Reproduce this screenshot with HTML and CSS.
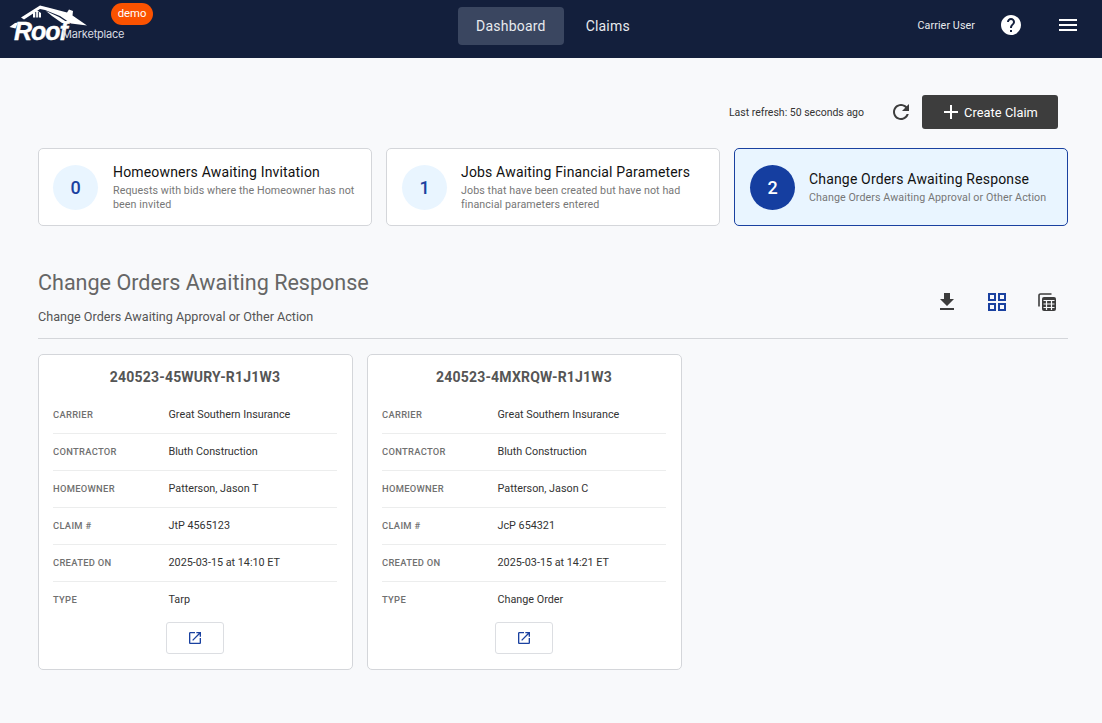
FILE: index.html
```html
<!DOCTYPE html>
<html lang="en">
<head>
    <meta charset="UTF-8">
    <meta name="viewport" content="width=device-width, initial-scale=1.0">
    <title>Roof Marketplace Dashboard</title>
    <link rel="stylesheet" href="styles.css">
</head>
<body>
    <header class="topbar">
        <div class="logo">
            <svg class="logo-roof" viewBox="0 0 100 40" width="100" height="40">
                <path d="M21 17.500 L40 5.500 L50 8 L67 12.500 L69 9.500 L73 11 L72.500 15.500 L87 25.500 L71 23.500 L60 16 L45 10 L40 9 L24 19.500 Z" fill="#fff"/>
                <path d="M46 11 L59 17 L69 23.500 L62 23 L52 16 Z" fill="#fff"/>
                <path d="M33 17.500 V13 L37 10.500 L41 13 V17.500 Z" fill="#fff"/>
                <path d="M35.700 12 V18 M38.400 12 V18" stroke="#131f3c" stroke-width="0.9"/>
                <path d="M9.500 27 L15 23 L18 22.500 L15.500 28.500 Z" fill="#fff"/>
            </svg>
            <span class="logo-roof-word">Roof</span>
            <span class="logo-market">Marketplace</span>
            <span class="demo-badge">demo</span>
        </div>
        <nav class="topnav">
            <a class="topnav-item active">Dashboard</a>
            <a class="topnav-item">Claims</a>
        </nav>
        <div class="topbar-right">
            <span class="user-name">Carrier User</span>
            <svg class="help-icon" viewBox="0 0 24 24" width="24" height="24"><path fill="#fff" d="M12 2C6.48 2 2 6.48 2 12s4.48 10 10 10 10-4.48 10-10S17.52 2 12 2zm1 17h-2v-2h2v2zm2.07-7.75l-.9.92C13.45 12.9 13 13.5 13 15h-2v-.5c0-1.1.45-2.1 1.17-2.83l1.24-1.26c.37-.36.59-.86.59-1.41 0-1.1-.9-2-2-2s-2 .9-2 2H8c0-2.21 1.79-4 4-4s4 1.79 4 4c0 .88-.36 1.68-.93 2.25z"/></svg>
            <svg class="menu-icon" viewBox="0 0 24 24" width="24" height="24"><path fill="#fff" d="M3 18h18v-2H3v2zm0-5h18v-2H3v2zm0-7v2h18V6H3z"/></svg>
        </div>
    </header>

    <main class="content">
        <div class="refresh-row">
            <span class="refresh-text">Last refresh: 50 seconds ago</span>
            <svg class="refresh-icon" viewBox="0 0 24 24" width="24" height="24"><path fill="#3d3d3d" d="M17.65 6.35C16.2 4.9 14.21 4 12 4c-4.42 0-7.99 3.58-7.99 8s3.57 8 7.99 8c3.73 0 6.84-2.55 7.73-6h-2.08c-.82 2.33-3.04 4-5.65 4-3.31 0-6-2.69-6-6s2.69-6 6-6c1.66 0 3.14.69 4.22 1.78L13 11h7V4l-2.35 2.35z"/></svg>
            <button class="create-btn">
                <svg viewBox="0 0 24 24" width="24" height="24"><path fill="#fff" d="M19 13h-6v6h-2v-6H5v-2h6V5h2v6h6v2z"/></svg>
                Create Claim
            </button>
        </div>

        <section class="stat-cards">
            <div class="stat-card">
                <div class="stat-num">0</div>
                <div>
                    <div class="stat-title">Homeowners Awaiting Invitation</div>
                    <div class="stat-desc">Requests with bids where the Homeowner has not been invited</div>
                </div>
            </div>
            <div class="stat-card">
                <div class="stat-num">1</div>
                <div>
                    <div class="stat-title">Jobs Awaiting Financial Parameters</div>
                    <div class="stat-desc">Jobs that have been created but have not had financial parameters entered</div>
                </div>
            </div>
            <div class="stat-card selected">
                <div class="stat-num">2</div>
                <div>
                    <div class="stat-title">Change Orders Awaiting Response</div>
                    <div class="stat-desc">Change Orders Awaiting Approval or Other Action</div>
                </div>
            </div>
        </section>

        <section class="list-head">
            <div>
                <h2>Change Orders Awaiting Response</h2>
                <p>Change Orders Awaiting Approval or Other Action</p>
            </div>
            <div class="view-icons">
                <svg viewBox="0 0 24 24" width="24" height="24"><path fill="#3d3d3d" d="M19 9h-4V3H9v6H5l7 7 7-7zM5 18v2h14v-2H5z"/></svg>
                <svg viewBox="0 0 24 24" width="24" height="24"><path fill="#1a41a0" d="M3 3v8h8V3H3zm6 6H5V5h4v4zm-6 4v8h8v-8H3zm6 6H5v-4h4v4zm4-16v8h8V3h-8zm6 6h-4V5h4v4zm-6 4v8h8v-8h-8zm6 6h-4v-4h4v4z"/></svg>
                <svg viewBox="0 0 24 24" width="24" height="24">
                    <path fill="none" stroke="#3d3d3d" stroke-width="1.6" d="M4 16.500V5.500A1.500 1.500 0 0 1 5.500 4H16.500"/>
                    <rect x="7" y="7" width="14" height="14" rx="2" fill="#3d3d3d"/>
                    <path stroke="#f8f9fb" stroke-width="1.200" d="M8.500 10.500H19.500M8.500 14H19.500M8.500 17.500H19.500M11.500 10.500V20M16.500 10.500V20"/>
                </svg>
            </div>
        </section>

        <section class="claim-cards">
            <article class="claim-card">
                <h3>240523-45WURY-R1J1W3</h3>
                <dl>
                    <div class="row"><dt>Carrier</dt><dd>Great Southern Insurance</dd></div>
                    <div class="row"><dt>Contractor</dt><dd>Bluth Construction</dd></div>
                    <div class="row"><dt>Homeowner</dt><dd>Patterson, Jason T</dd></div>
                    <div class="row"><dt>Claim #</dt><dd>JtP 4565123</dd></div>
                    <div class="row"><dt>Created On</dt><dd>2025-03-15 at 14:10 ET</dd></div>
                    <div class="row"><dt>Type</dt><dd>Tarp</dd></div>
                </dl>
                <button class="open-btn"><svg viewBox="0 0 24 24" width="16" height="16"><path fill="#1a41a0" d="M19 19H5V5h7V3H5c-1.110 0-2 .9-2 2v14c0 1.100.89 2 2 2h14c1.100 0 2-.9 2-2v-7h-2v7zM14 3v2h3.590l-9.830 9.830 1.410 1.410L19 6.410V10h2V3h-7z"/></svg></button>
            </article>
            <article class="claim-card">
                <h3>240523-4MXRQW-R1J1W3</h3>
                <dl>
                    <div class="row"><dt>Carrier</dt><dd>Great Southern Insurance</dd></div>
                    <div class="row"><dt>Contractor</dt><dd>Bluth Construction</dd></div>
                    <div class="row"><dt>Homeowner</dt><dd>Patterson, Jason C</dd></div>
                    <div class="row"><dt>Claim #</dt><dd>JcP 654321</dd></div>
                    <div class="row"><dt>Created On</dt><dd>2025-03-15 at 14:21 ET</dd></div>
                    <div class="row"><dt>Type</dt><dd>Change Order</dd></div>
                </dl>
                <button class="open-btn"><svg viewBox="0 0 24 24" width="16" height="16"><path fill="#1a41a0" d="M19 19H5V5h7V3H5c-1.110 0-2 .9-2 2v14c0 1.100.89 2 2 2h14c1.100 0 2-.9 2-2v-7h-2v7zM14 3v2h3.590l-9.830 9.830 1.410 1.410L19 6.410V10h2V3h-7z"/></svg></button>
            </article>
        </section>
    </main>
</body>
</html>
```

FILE: styles.css
```css
* { margin: 0; padding: 0; box-sizing: border-box; }
html, body { height: 100%; }
body { font-family: Roboto, Arial, sans-serif; background: #f8f9fb; color: #111; overflow: hidden; }

.topbar { height: 58px; background: #131f3c; display: grid; grid-template-columns: 1fr auto 1fr; align-items: start; }
.logo { position: relative; height: 58px; }
.logo-roof { position: absolute; left: 0; top: 0; }
.logo-roof-word { position: absolute; left: 14px; top: 17px; font: italic 700 25px/28px "Liberation Sans", sans-serif; color: #fff; letter-spacing: -1px; -webkit-text-stroke: 0.4px #fff; }
.logo-market { position: absolute; left: 62px; top: 26px; font: 400 11px/16px Inter, sans-serif; color: #d8dbe2; letter-spacing: -0.2px; }
.demo-badge { position: absolute; left: 111px; top: 3px; width: 42px; height: 22px; border-radius: 11px; background: #fb5200; color: #fff; font-size: 11.300px; line-height: 21px; text-align: center; }

.topnav { display: flex; padding-top: 7px; margin-left: 8px; }
.topnav-item { height: 38px; padding: 0 22px; font-size: 14px; line-height: 38px; letter-spacing: 0.2px; color: #e8eaee; border-radius: 4px; }
.topnav-item.active { background: #3a4660; padding: 0 18px; }

.topbar-right { display: flex; justify-content: flex-end; align-items: center; height: 50px; padding-right: 22px; }
.user-name { font-size: 10.700px; letter-spacing: 0.1px; color: #e8eaee; margin-right: 24px; }
.help-icon { margin-right: 33px; }

.content { padding: 37px 34px 0 38px; }
.refresh-row { display: flex; justify-content: flex-end; align-items: center; height: 34px; padding-right: 10px; }
.refresh-text { font-size: 10.500px; color: #333; margin-right: 25px; }
.refresh-icon { margin-right: 9px; }
.create-btn { display: flex; align-items: center; justify-content: center; gap: 1px; width: 136px; height: 34px; padding-right: 3px; background: #3d3d3d; border: 0; border-radius: 3px; color: #fff; font: 400 12.800px Roboto, sans-serif; letter-spacing: 0.05px; }

.stat-cards { display: grid; grid-template-columns: repeat(3, 334px); gap: 14px; margin-top: 19px; }
.stat-card { display: flex; align-items: center; gap: 15px; height: 78px; padding: 0 14px; background: #fff; border: 1px solid #d4d6da; border-radius: 5px; }
.stat-card + .stat-card { gap: 14px; padding-left: 15px; }
.stat-num { flex: none; width: 45px; height: 45px; border-radius: 50%; background: #e9f5ff; color: #1a41a0; font-size: 18px; font-weight: 500; line-height: 45px; text-align: center; }
.stat-title { font-size: 14px; letter-spacing: 0.17px; line-height: 18px; color: #111; }
.stat-desc { font-size: 10.700px; letter-spacing: 0.08px; line-height: 14px; color: #777; margin-top: 3px; }
.stat-card.selected { background: #e9f5ff; border-color: #1a41a0; }
.stat-card.selected .stat-num { background: #153ea0; color: #fff; }

.list-head { display: flex; justify-content: space-between; align-items: flex-start; height: 113px; padding-top: 44px; border-bottom: 1px solid #d4d6da; }
.list-head h2 { font-size: 21.550px; font-weight: 400; line-height: 26px; color: #666; }
.list-head p { font-size: 12.600px; line-height: 16px; color: #555; margin-top: 13px; }
.view-icons { display: flex; gap: 26px; padding: 20px 9px 0 0; }

.claim-cards { display: flex; gap: 14px; margin-top: 15px; }
.claim-card { width: 315px; height: 316px; background: #fff; border: 1px solid #d4d6da; border-radius: 5px; padding: 0 15px 0 14px; }
.claim-card h3 { font-size: 14px; font-weight: 700; line-height: 20px; color: #555; text-align: center; padding-top: 12px; height: 42px; letter-spacing: 0.2px; }
.row { display: flex; align-items: center; height: 37px; padding-bottom: 2px; border-bottom: 1px solid #eceded; }
.row:last-child { border-bottom: 0; }
.row dt { width: 115.500px; font-size: 9.400px; font-weight: 500; letter-spacing: 0.3px; color: #707070; text-transform: uppercase; }
.row dd { font-size: 10.800px; color: #333; }
.open-btn { display: flex; align-items: center; justify-content: center; width: 58px; height: 32px; margin: 3px auto 0; background: #fff; border: 1px solid #dcdee2; border-radius: 3px; }
```
